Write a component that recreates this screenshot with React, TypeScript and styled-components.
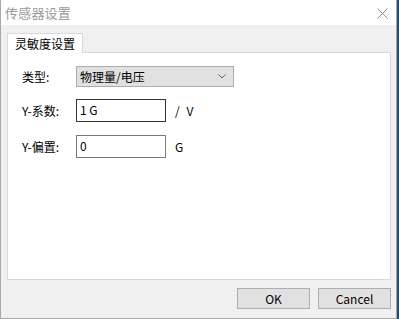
import React from "react";
import styled, { createGlobalStyle } from "styled-components";

const GlobalStyle = createGlobalStyle`
  html, body {
    margin: 0;
    padding: 0;
    background: #2c4a6b;
  }
  body {
    font-family: "Noto Sans CJK SC", "Noto Sans", sans-serif;
    font-size: 12px;
    color: #000;
  }
`;

const Window = styled.div({
  width: 397,
  height: 319,
  boxSizing: "border-box",
  border: "1px solid #a9a9a9",
  borderTop: "none",
  backgroundColor: "#f0f0f0",
  display: "flex",
  flexDirection: "column",
});

const TitleBar = styled.div({
  height: 25,
  backgroundColor: "#fff",
  display: "flex",
  alignItems: "center",
  justifyContent: "space-between",
  padding: "0 8px 0 4px",
  flexShrink: 0,
});

const Title = styled.span({
  fontSize: 13,
  lineHeight: "25px",
  color: "#9a9a9a",
  letterSpacing: 0.2,
});

const CloseButton = styled.svg({
  width: 11,
  height: 11,
  marginTop: 1,
});

const Body = styled.div({
  flex: 1,
  display: "flex",
  flexDirection: "column",
  padding: "8px 5px 0 6px",
});

const TabStrip = styled.div({
  display: "flex",
  height: 19,
});

const Tab = styled.div({
  width: 76,
  boxSizing: "border-box",
  height: 20,
  border: "1px solid #d9d9d9",
  borderBottom: "none",
  backgroundColor: "#fff",
  display: "flex",
  alignItems: "center",
  justifyContent: "center",
  fontSize: 12,
  lineHeight: "16px",
  paddingTop: 1,
  position: "relative",
  zIndex: 1,
});

const Panel = styled.div({
  width: 384,
  height: 228,
  boxSizing: "border-box",
  border: "1px solid #d9d9d9",
  backgroundColor: "#fff",
  padding: "13px 14px",
  display: "flex",
  flexDirection: "column",
});

const Row = styled.div<{ $gap: number }>(({ $gap }) => ({
  display: "flex",
  alignItems: "center",
  marginTop: $gap,
}));

const Label = styled.span({
  width: 54,
  fontSize: 12,
  lineHeight: "16px",
});

const Combo = styled.div({
  width: 158,
  height: 21,
  boxSizing: "border-box",
  border: "1px solid #adadad",
  backgroundColor: "#e1e1e1",
  display: "flex",
  alignItems: "center",
  justifyContent: "space-between",
  padding: "0 7px 0 3px",
  fontSize: 12,
  lineHeight: "16px",
});

const TextBox = styled.div<{ $focused?: boolean }>(({ $focused }) => ({
  width: 90,
  height: 23,
  boxSizing: "border-box",
  border: `1px solid ${$focused ? "#333333" : "#7a7a7a"}`,
  backgroundColor: "#fff",
  padding: "2px 3px",
  fontSize: 12,
  lineHeight: "16px",
}));

const Unit = styled.span({
  marginLeft: 9,
  fontSize: 12,
  lineHeight: "16px",
  wordSpacing: 4,
});

const Footer = styled.div({
  display: "flex",
  justifyContent: "flex-end",
  gap: 8,
  padding: "8px 0 0 0",
});

const Button = styled.div({
  width: 73,
  height: 21,
  boxSizing: "border-box",
  border: "1px solid #adadad",
  backgroundColor: "#e1e1e1",
  display: "flex",
  alignItems: "center",
  justifyContent: "center",
  fontSize: 12,
  lineHeight: "16px",
});

const App: React.FC = () => {
  return (
    <>
      <GlobalStyle />
      <Window>
        <TitleBar>
          <Title>传感器设置</Title>
          <CloseButton viewBox="0 0 11 11">
            <path d="M0.5 0.5 L10.5 10.5 M10.5 0.5 L0.5 10.5" stroke="#8a8a8a" strokeWidth="1" fill="none" />
          </CloseButton>
        </TitleBar>
        <Body>
          <TabStrip>
            <Tab>灵敏度设置</Tab>
          </TabStrip>
          <Panel>
            <Row $gap={0}>
              <Label>类型:</Label>
              <Combo>
                <span>物理量/电压</span>
                <svg width="8" height="5" viewBox="0 0 8 5">
                  <path d="M0.5 0.5 L4 4 L7.5 0.5" stroke="#606060" strokeWidth="1" fill="none" />
                </svg>
              </Combo>
            </Row>
            <Row $gap={12}>
              <Label>Y-系数:</Label>
              <TextBox $focused>1 G</TextBox>
              <Unit>/ V</Unit>
            </Row>
            <Row $gap={13}>
              <Label>Y-偏置:</Label>
              <TextBox>0</TextBox>
              <Unit>G</Unit>
            </Row>
          </Panel>
          <Footer>
            <Button>OK</Button>
            <Button>Cancel</Button>
          </Footer>
        </Body>
      </Window>
    </>
  );
};

export default App;
